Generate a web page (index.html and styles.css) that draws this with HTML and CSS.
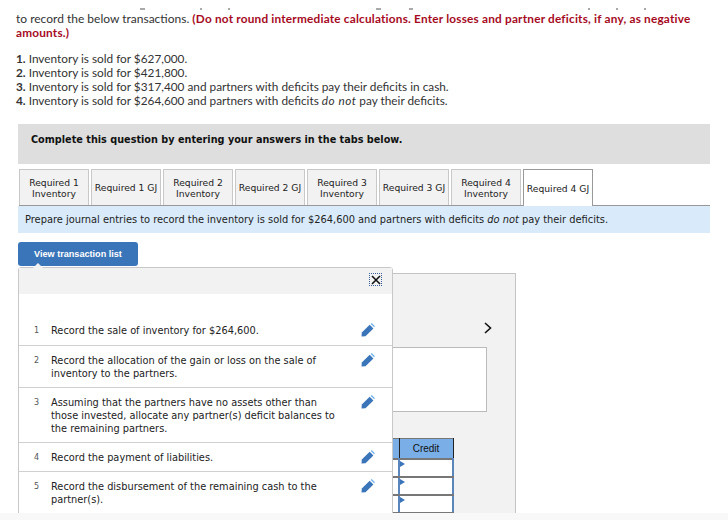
FILE: index.html
```html
<!DOCTYPE html>
<html>
<head>
    <title>Required 4 GJ</title>
    <link rel="stylesheet" href="styles.css">
</head>
<body>
    <div class="page">
        <svg class="cut-line" width="728" height="10" viewBox="0 0 728 10">
            <path d="M140 9h5M201 8v2M229 8v2M376 9h5M409 9h4M589 8v2M617 8v2M645 8v2" />
        </svg>
        <div class="intro">
            <p><span>to record the below transactions.</span> <strong class="warn">(Do not round intermediate calculations. Enter losses and partner deficits, if any, as negative</strong> <strong class="warn">amounts.)</strong></p>
            <ol class="cases">
                <li><b>1.</b> Inventory is sold for $627,000.</li>
                <li><b>2.</b> Inventory is sold for $421,800.</li>
                <li><b>3.</b> Inventory is sold for $317,400 and partners with deficits pay their deficits in cash.</li>
                <li><b>4.</b> Inventory is sold for $264,600 and partners with deficits <em>do not</em> pay their deficits.</li>
            </ol>
        </div>

        <div class="banner">Complete this question by entering your answers in the tabs below.</div>

        <div class="tabs">
            <div class="tab">Required 1<br>Inventory</div>
            <div class="tab">Required 1 GJ</div>
            <div class="tab">Required 2<br>Inventory</div>
            <div class="tab">Required 2 GJ</div>
            <div class="tab">Required 3<br>Inventory</div>
            <div class="tab">Required 3 GJ</div>
            <div class="tab">Required 4<br>Inventory</div>
            <div class="tab active">Required 4 GJ</div>
        </div>
        <div class="prompt">Prepare journal entries to record the inventory is sold for $264,600 and partners with deficits <em>do not</em> pay their deficits.</div>

        <button class="view-btn">View transaction list</button>

        <div class="workspace">
            <svg class="next" width="10" height="14" viewBox="0 0 10 14"><path d="M2 2l5.5 5-5.5 5" /></svg>
            <div class="entry-box"></div>
            <table class="ledger">
                <tr><th class="spacer"></th><th>Credit</th></tr>
                <tr><td class="spacer"></td><td class="cell"></td></tr>
                <tr><td class="spacer"></td><td class="cell"></td></tr>
                <tr><td class="spacer"></td><td class="cell"></td></tr>
            </table>
        </div>

        <div class="popup">
            <div class="popup-head">
                <span class="close"><svg width="10" height="10" viewBox="0 0 10 10"><path d="M1 1l8 8M9 1l-8 8" /></svg></span>
            </div>
            <div class="rows">
                <div class="row first">
                    <span class="num">1</span>
                    <span class="txt">Record the sale of inventory for $264,600.</span>
                    <svg class="pen" width="14" height="14" viewBox="0 0 14 14"><path d="M0.5 13.5l0.3-3.9 7.9-7.9 3.7 3.7-7.9 7.9z" /><path class="cap" d="M9.7 0.9l1-0.8 3.2 3.2-0.8 1z" /></svg>
                </div>
                <div class="row">
                    <span class="num">2</span>
                    <span class="txt">Record the allocation of the gain or loss on the sale of inventory to the partners.</span>
                    <svg class="pen" width="14" height="14" viewBox="0 0 14 14"><path d="M0.5 13.5l0.3-3.9 7.9-7.9 3.7 3.7-7.9 7.9z" /><path class="cap" d="M9.7 0.9l1-0.8 3.2 3.2-0.8 1z" /></svg>
                </div>
                <div class="row">
                    <span class="num">3</span>
                    <span class="txt">Assuming that the partners have no assets other than those invested, allocate any partner(s) deficit balances to the remaining partners.</span>
                    <svg class="pen" width="14" height="14" viewBox="0 0 14 14"><path d="M0.5 13.5l0.3-3.9 7.9-7.9 3.7 3.7-7.9 7.9z" /><path class="cap" d="M9.7 0.9l1-0.8 3.2 3.2-0.8 1z" /></svg>
                </div>
                <div class="row">
                    <span class="num">4</span>
                    <span class="txt">Record the payment of liabilities.</span>
                    <svg class="pen" width="14" height="14" viewBox="0 0 14 14"><path d="M0.5 13.5l0.3-3.9 7.9-7.9 3.7 3.7-7.9 7.9z" /><path class="cap" d="M9.7 0.9l1-0.8 3.2 3.2-0.8 1z" /></svg>
                </div>
                <div class="row">
                    <span class="num">5</span>
                    <span class="txt">Record the disbursement of the remaining cash to the partner(s).</span>
                    <svg class="pen" width="14" height="14" viewBox="0 0 14 14"><path d="M0.5 13.5l0.3-3.9 7.9-7.9 3.7 3.7-7.9 7.9z" /><path class="cap" d="M9.7 0.9l1-0.8 3.2 3.2-0.8 1z" /></svg>
                </div>
            </div>
        </div>
    </div>
</body>
</html>
```
FILE: styles.css
```css
html, body {
    margin: 0;
    padding: 0;
    background-color: #f8f8f8;
}
.page {
    position: relative;
    width: 728px;
    height: 513px;
    overflow: hidden;
    background-color: #fff;
    font-family: "DejaVu Sans", sans-serif;
    color: #222;
}
.cut-line {
    display: block;
}
.cut-line path {
    stroke: #555;
    fill: none;
}
.intro {
    padding: 2px 30px 0 16px;
    font-family: Lato, sans-serif;
    font-size: 11.8px;
    line-height: 14px;
    color: #333;
}
.intro p {
    margin: 0;
    font-size: 12px;
}
.warn {
    color: #a60a1e;
    font-size: 11.8px;
    letter-spacing: 0.2px;
}
.cases {
    list-style: none;
    margin: 12px 0 0;
    padding: 0;
}
.cases em {
    letter-spacing: 0.5px;
}
.banner {
    margin: 16px 18px 0 18px;
    height: 40px;
    line-height: 31px;
    padding-left: 13px;
    background-color: #dedede;
    font-size: 9.7px;
    font-weight: bold;
    color: #111;
}
.tabs {
    display: flex;
    gap: 2px;
    margin: 5px 18px 0 19px;
    height: 36px;
    border-bottom: 1px solid #999;
}
.tab {
    width: 68px;
    height: 35px;
    border: 1px solid #c8c8c8;
    border-bottom: none;
    background-color: #f2f2f2;
    display: flex;
    align-items: center;
    justify-content: center;
    text-align: center;
    font-size: 9.2px;
    line-height: 11px;
}
.tab.active {
    background-color: #fff;
    border-color: #999;
    height: 36px;
    margin-bottom: -1px;
}
.prompt {
    margin: 0 18px;
    height: 27px;
    line-height: 27px;
    padding-left: 7px;
    background-color: #d9ebfa;
    font-size: 9.85px;
}
.view-btn {
    display: block;
    margin: 9px 0 0 18px;
    width: 120px;
    height: 24px;
    padding: 0;
    border: none;
    border-radius: 3px;
    background-color: #3b75b9;
    color: #fff;
    font-family: "Liberation Sans", sans-serif;
    font-size: 9.1px;
    font-weight: bold;
}
.workspace {
    position: absolute;
    left: 18px;
    top: 273px;
    width: 496px;
    height: 260px;
    border: 1px solid #c4c4c4;
    background-color: #f2f2f2;
}
.next {
    position: absolute;
    right: 22px;
    top: 47px;
}
.next path {
    fill: none;
    stroke: #111;
    stroke-width: 1.6;
}
.entry-box {
    position: absolute;
    left: 0;
    top: 73px;
    width: 466px;
    height: 63px;
    border: 1px solid #bbb;
    background-color: #fff;
}
.ledger {
    position: absolute;
    left: 360px;
    top: 164px;
    width: 75px;
    table-layout: fixed;
    border-collapse: collapse;
    font-family: "Liberation Sans", sans-serif;
    font-size: 10px;
}
.ledger th {
    height: 19px;
    padding: 0;
    background-color: #7aaee6;
    border: 1px solid #222;
    border-top-color: #777;
    font-weight: normal;
    color: #111;
}
.ledger td {
    height: 16px;
    padding: 0;
    background-color: #fff;
    border: 2px solid #777;
    border-left-color: #5b86bd;
    border-right-color: #5b86bd;
}
.ledger .spacer {
    width: 18px;
}
.ledger .cell {
    position: relative;
}
.ledger .cell::before {
    content: "";
    position: absolute;
    left: 0;
    top: 1px;
    border-left: 5px solid #3b75b9;
    border-top: 3px solid transparent;
    border-bottom: 3px solid transparent;
}
.popup {
    position: absolute;
    left: 18px;
    top: 267px;
    width: 373px;
    height: 260px;
    border: 1px solid #c8c8c8;
    border-radius: 3px 3px 0 0;
    background-color: #fff;
}
.popup::before {
    content: "";
    position: absolute;
    left: 14px;
    top: -5px;
    border-left: 5px solid transparent;
    border-right: 5px solid transparent;
    border-bottom: 5px solid #f2f2f2;
}
.popup-head {
    height: 26px;
    background-color: #f2f2f2;
    display: flex;
    justify-content: flex-end;
    padding: 5px 10px 0 0;
    box-sizing: border-box;
}
.close {
    width: 11px;
    height: 11px;
    border: 1px dotted #3b5f9a;
    display: flex;
    align-items: center;
    justify-content: center;
}
.close path {
    stroke: #111;
    stroke-width: 1.6;
    fill: none;
}
.rows {
    padding-top: 22px;
}
.row {
    display: flex;
    align-items: flex-start;
    padding: 8px 17px 7px 15px;
    border-bottom: 1px solid #d0d0d0;
    font-size: 9.8px;
    line-height: 13px;
    color: #222;
}
.row.first {
    padding-bottom: 8px;
}
.row:last-child {
    border-bottom: none;
}
.num {
    width: 17px;
    flex-shrink: 0;
    font-size: 8px;
    color: #555;
}
.txt {
    width: 290px;
}
.pen {
    margin-left: auto;
    margin-top: -1px;
}
.pen path {
    fill: #3b75b9;
}
.pen .cap {
    fill: #6fb0ea;
}
```
